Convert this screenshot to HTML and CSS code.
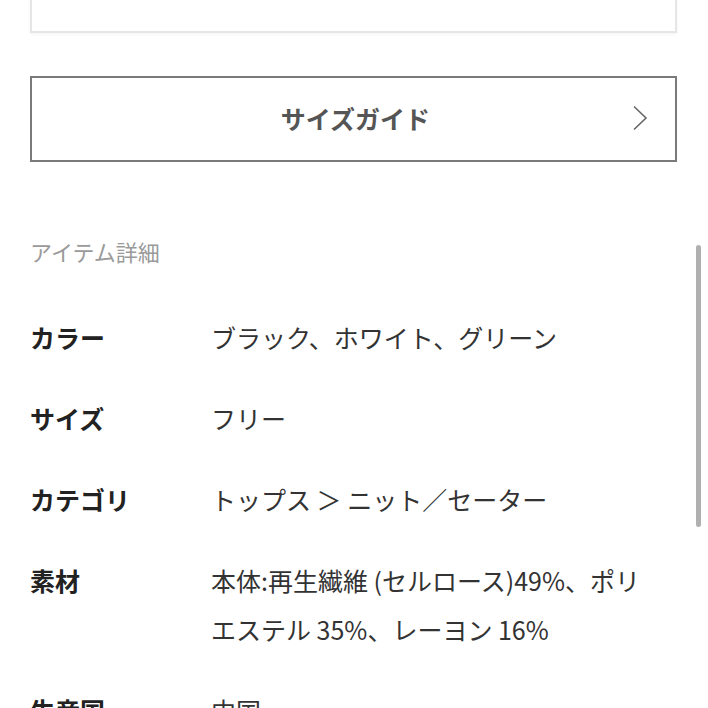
FILE: index.html
```html
<!DOCTYPE html>
<html lang="ja">
<head>
<meta charset="utf-8">
<link rel="stylesheet" href="styles.css">
</head>
<body>
<div class="page">
  <div class="topbox"></div>
  <a class="guide">
    <span class="guide-label">サイズガイド</span>
    <svg class="chev" width="16" height="26" viewBox="0 0 16 26"><path d="M2 1.5 L14 13 L2 24.5" fill="none" stroke="#666" stroke-width="1.6"/></svg>
  </a>
  <h2 class="title">アイテム詳細</h2>
  <dl class="details">
    <dt>カラー</dt><dd>ブラック、ホワイト、グリーン</dd>
    <dt>サイズ</dt><dd>フリー</dd>
    <dt>カテゴリ</dt><dd>トップス ＞ ニット／セーター</dd>
    <dt>素材</dt><dd>本体:再生繊維 (セルロース)49%、ポリエステル 35%、レーヨン 16%</dd>
    <dt>生産国</dt><dd>中国</dd>
  </dl>
</div>
<div class="scrollbar"></div>
</body>
</html>
```
FILE: styles.css
```css
html, body { margin: 0; padding: 0; background: #fff; overflow: hidden; }
body { font-family: "Noto Sans CJK JP", "Noto Sans", sans-serif; color: #333; }
.page { padding: 0 31px 0 30px; }
.topbox {
  margin-top: -40px;
  height: 69px;
  border: 2px solid #e6e6e6;
  box-shadow: 0 1px 3px rgba(0,0,0,0.05);
}
.guide {
  margin-top: 43px;
  height: 82px;
  border: 2px solid #7a7a7a;
  display: flex;
  align-items: center;
  justify-content: center;
  position: relative;
}
.guide-label { font-size: 25px; font-weight: 700; color: #555; margin: 0 0 3px 4px; }
.chev { position: absolute; right: 27px; top: 27px; }
.title {
  margin: 74px 0 0;
  font-size: 22px;
  line-height: 30px;
  font-weight: 400;
  color: #9a9a9a;
}
.details {
  margin: 47px 0 0;
  display: grid;
  grid-template-columns: 181px 1fr;
  row-gap: 32px;
  font-size: 25px;
  line-height: 49px;
}
.details dt { font-weight: 700; color: #222; margin: 0; }
.details dd { margin: 0; color: #333; padding-right: 24px; }
.scrollbar {
  position: fixed;
  left: 696px;
  top: 245px;
  width: 5px;
  height: 282px;
  border-radius: 3px;
  background: #b0b0b0;
}
```
